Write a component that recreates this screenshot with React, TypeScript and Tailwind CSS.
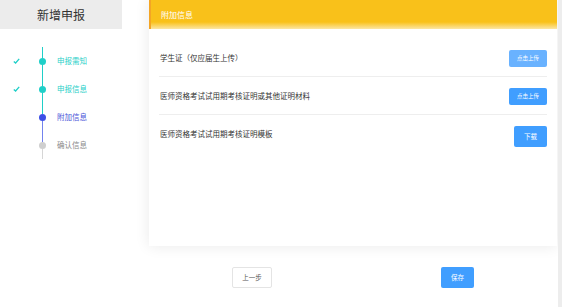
const steps = [
  { label: "申报需知", done: true, state: "done", top: "bg-[#1fcfc8]", bottom: "bg-[#1fcfc8]" },
  { label: "申报信息", done: true, state: "done", top: "bg-[#1fcfc8]", bottom: "bg-[#1fcfc8]" },
  { label: "附加信息", done: false, state: "active", top: "bg-[#1fcfc8]", bottom: "bg-[#7383ee]" },
  { label: "确认信息", done: false, state: "todo", top: "bg-[#7383ee]", bottom: "bg-[#d6d6d6]" },
];

const rows = [
  { title: "学生证（仅应届生上传）", action: "点击上传", light: true },
  { title: "医师资格考试试用期考核证明或其他证明材料", action: "点击上传", light: false },
  { title: "医师资格考试试用期考核证明模板", action: "下载", light: false },
];

function StepItem({ step }: { step: (typeof steps)[number] }) {
  const dot =
    step.state === "done" ? "bg-[#1fcfc8]" : step.state === "active" ? "bg-[#3c4fe6]" : "bg-[#cfcfcf]";
  const text =
    step.state === "done" ? "text-[#1fcfc8]" : step.state === "active" ? "text-[#4b56d9]" : "text-[#8a8a8a]";
  return (
    <div className="flex h-[28px] items-center">
      <div className="flex w-[36px] justify-center">
        {step.done && (
          <svg width="7" height="6" viewBox="0 0 7 6" className="ml-[-3px]">
            <path d="M0.8 3.4 L2.6 5 L6.2 0.8" fill="none" stroke="#1fcfc8" strokeWidth="1.3" />
          </svg>
        )}
      </div>
      <div className="flex h-full w-[12px] flex-col items-center">
        <div className={`w-px flex-1 ${step.top}`} />
        <div className={`h-[7px] w-[7px] shrink-0 rounded-full ${dot}`} />
        <div className={`w-px flex-1 ${step.bottom}`} />
      </div>
      <span className={`ml-[9px] text-[7.5px] ${text}`}>{step.label}</span>
    </div>
  );
}

export default function App() {
  return (
    <div className="flex h-[307px] w-[562px] bg-white font-['Noto_Sans_CJK_SC','Noto_Sans',sans-serif] text-[#333]">
      <aside className="flex w-[122px] shrink-0 flex-col bg-white">
        <div className="flex h-[29px] items-center justify-center bg-[#ececec] text-[12px] text-[#333]">
          新增申报
        </div>
        <div className="mt-[18px] flex flex-col">
          {steps.map((s) => (
            <StepItem key={s.label} step={s} />
          ))}
        </div>
      </aside>

      <main className="flex flex-1 flex-col pl-[27px] pr-[1px]">
        <section className="flex h-[246px] flex-col bg-white shadow-[0_0_14px_rgba(0,0,0,0.09)]">
          <div className="flex h-[29px] items-center border-l-2 border-[#f4a524] bg-[linear-gradient(180deg,#f9c11a_0%,#f9c11a_76%,#fce6a4_100%)] pl-[10px] text-[8px] text-white">
            附加信息
          </div>
          <div className="flex flex-col px-[10px] pt-[10px]">
            {rows.map((r, i) => (
              <div
                key={r.title}
                className={`flex h-[38px] items-center justify-between ${i < rows.length - 1 ? "border-b border-[#eeeeee]" : ""}`}
              >
                <span className="pl-[1px] text-[7.5px] text-[#333]">{r.title}</span>
                {r.action === "下载" ? (
                  <button className="mt-[5px] h-[21px] w-[33px] rounded-[2px] bg-[#409eff] text-[6.5px] text-white">
                    {r.action}
                  </button>
                ) : (
                  <button
                    className={`mt-[2px] h-[17px] w-[38px] rounded-[2px] text-[5.5px] text-white ${r.light ? "bg-[#69b2ff]" : "bg-[#409eff]"}`}
                  >
                    {r.action}
                  </button>
                )}
              </div>
            ))}
          </div>
        </section>
        <div className="mt-[21px] grid grid-cols-2 justify-items-center">
          <button className="ml-[2px] h-[21px] w-[40px] rounded-[2px] border border-[#e4e4e4] bg-white text-[6.5px] text-[#555]">
            上一步
          </button>
          <button className="mr-[-5px] h-[21px] w-[33px] rounded-[2px] bg-[#409eff] text-[6.5px] text-white">
            保存
          </button>
        </div>
      </main>
      <div className="w-[4px] shrink-0 bg-[#ededed]" />
    </div>
  );
}
